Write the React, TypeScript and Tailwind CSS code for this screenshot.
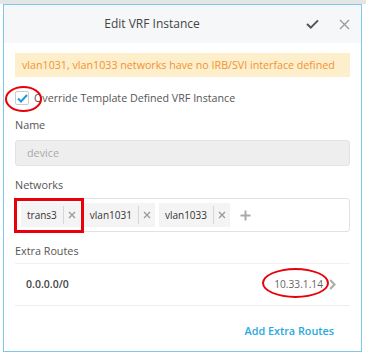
import React from "react";

const tags = ["trans3", "vlan1031", "vlan1033"];

const Tag = ({ label }: { label: string }) => {
  return (
    <div className="flex h-[24px] items-center bg-[#f4f4f4] text-[10px] text-[#333]">
      <span className="pr-[6px] pl-[6px]">{label}</span>
      <span className="h-[18px] w-px bg-[#d6d6d6]" />
      <span className="flex w-[16px] items-center justify-center text-[#999]">
        <svg width="8" height="8" viewBox="0 0 8 8">
          <path d="M1 1 L7 7 M7 1 L1 7" stroke="currentColor" strokeWidth="1.3" />
        </svg>
      </span>
    </div>
  );
};

const App = () => {
  return (
    <div
      className="relative h-[356px] w-[366px] overflow-hidden bg-white pt-[4px] pl-[3px]"
      style={{ fontFamily: '"Open Sans", "Liberation Sans", sans-serif' }}
    >
      {/* grey strip above dialog */}
      <div className="absolute top-0 left-0 h-[4px] w-full bg-[#e4e5e6]" />
      {/* Dialog */}
      <div className="relative h-[348px] w-[359px] border border-[#7ec8ec] bg-white">
        {/* Header */}
        <div className="flex h-[38px] items-center bg-[#f6f7f8] text-[#444]">
          <div className="flex-1 pr-[4px] text-center text-[12px]">Edit VRF Instance</div>
          <div className="flex items-center gap-[20px] pr-[11px] pl-[2px]">
            <svg width="13" height="10" viewBox="0 0 13 10">
              <path d="M1 5 L4.8 8.6 L12 1.4" stroke="#555" strokeWidth="2" fill="none" />
            </svg>
            <svg width="11" height="11" viewBox="0 0 11 11">
              <path d="M1 1 L10 10 M10 1 L1 10" stroke="#999" strokeWidth="1.3" />
            </svg>
          </div>
        </div>
        {/* Body */}
        <div className="px-[11px] pt-[10px]">
          <div className="flex h-[24px] items-center bg-[#fdefcb] pl-[7px] text-[10.7px] text-[#f29233]">
            vlan1031, vlan1033 networks have no IRB/SVI interface defined
          </div>
          {/* checkbox */}
          <div className="mt-[13px] flex h-[16px] items-center text-[10.7px] text-[#555]">
            <div className="flex h-[14px] w-[14px] items-center justify-center rounded-[2px] border border-[#ccc] bg-white">
              <svg width="11" height="9" viewBox="0 0 11 9">
                <path d="M1 4.5 L4 7.5 L10 1" stroke="#1e9de0" strokeWidth="2" fill="none" />
              </svg>
            </div>
            <span className="ml-[5px]">Override Template Defined VRF Instance</span>
          </div>
          <div className="mt-[11px] text-[10.8px] leading-[16px] text-[#555]">Name</div>
          <div className="mt-[7px] flex h-[26px] items-center rounded-[3px] border border-[#e2e2e2] bg-[#eeeeee] pl-[11px] text-[10.8px] text-[#aaa]">
            device
          </div>
          <div className="mt-[11px] text-[10.8px] leading-[16px] text-[#555]">Networks</div>
          <div className="mt-[5px] flex h-[34px] items-center gap-[4px] rounded-[3px] border border-[#e2e2e2] pl-[5px]">
            {tags.map((t) => (
              <Tag key={t} label={t} />
            ))}
            <svg className="ml-[6px]" width="11" height="11" viewBox="0 0 11 11">
              <path d="M5.5 0.5 V10.5 M0.5 5.5 H10.5" stroke="#aaa" strokeWidth="2" />
            </svg>
          </div>
          <div className="mt-[11px] text-[10.8px] leading-[16px] text-[#555]">Extra Routes</div>
          <div className="mt-[4px] border-t border-[#f0f0f0]" />
          <div className="flex h-[42px] items-center justify-between border-b border-[#eeeeee] pl-[11px]">
            <span className="text-[10.5px] font-semibold text-[#444]">0.0.0.0/0</span>
            <span className="flex items-center text-[10.2px] text-[#666]">
              10.33.1.14
              <svg className="mr-[14px] ml-[6px]" width="7" height="11" viewBox="0 0 7 11">
                <path d="M1.2 1 L5.5 5.5 L1.2 10" stroke="#aaa" strokeWidth="2" fill="none" />
              </svg>
            </span>
          </div>
          <div className="mt-[17px] pr-[16px] text-right text-[10.8px] font-semibold text-[#29a8e0]">
            Add Extra Routes
          </div>
        </div>
      </div>
      {/* red annotations */}
      <div className="absolute top-[86px] left-[5px] h-[26px] w-[37px] rounded-[50%] border-[2.5px] border-[#e8000b]" />
      <div className="absolute top-[198px] left-[14px] h-[35px] w-[70px] border-[3px] border-[#e8000b]" />
      <div className="absolute top-[268px] left-[262px] h-[30px] w-[67px] rounded-[50%] border-[2.5px] border-[#e8000b]" />
    </div>
  );
};

export default App;
